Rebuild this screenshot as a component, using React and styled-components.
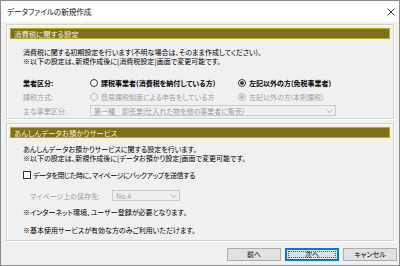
import styled, { createGlobalStyle } from 'styled-components'

const GlobalStyle = createGlobalStyle`
  html, body {
    margin: 0;
    padding: 0;
    background: #f0f0f0;
  }
  body {
    font-family: "Noto Sans CJK JP", "Noto Sans", sans-serif;
    font-feature-settings: "palt";
  }
`

const App = () => {
  return (
    <Window>
      <GlobalStyle />
      <TitleBar>
        <Title>データファイルの新規作成</Title>
        <Close>
          <svg width="8" height="8" viewBox="0 0 8 8">
            <path d="M0.5 0.5 L7.5 7.5 M7.5 0.5 L0.5 7.5" stroke="#222" strokeWidth="0.9" />
          </svg>
        </Close>
      </TitleBar>

      <Body>
        <Group>
          <GroupHeader>消費税に関する設定</GroupHeader>
          <Para>
            <Line>消費税に関する初期設定を行います(不明な場合は、そのまま作成してください)。</Line>
            <Line>※以下の設定は、新規作成後に[消費税設定]画面で変更可能です。</Line>
          </Para>
          <Rows>
            <Row $h={14}>
              <Label $bold>業者区分:</Label>
              <Choice $w={148}>
                <Radio />
                <ChoiceText $bold>課税事業者(消費税を納付している方)</ChoiceText>
              </Choice>
              <Choice>
                <Radio $checked />
                <ChoiceText $bold>左記以外の方(免税事業者)</ChoiceText>
              </Choice>
            </Row>
            <Row $h={13}>
              <Label $disabled>課税方式:</Label>
              <Choice $w={148}>
                <Radio $disabled />
                <ChoiceText $disabled>簡易課税制度による申告をしている方</ChoiceText>
              </Choice>
              <Choice>
                <Radio $checked $disabled />
                <ChoiceText $disabled>左記以外の方(本則課税)</ChoiceText>
              </Choice>
            </Row>
            <Row $h={15}>
              <Label $disabled>主な事業区分:</Label>
              <Select $w={246}>
                <span>第一種　卸売業(仕入れた物を他の事業者に販売)</span>
                <Chevron />
              </Select>
            </Row>
          </Rows>
        </Group>

        <Group $second>
          <GroupHeader>あんしんデータお預かりサービス</GroupHeader>
          <Para $top={7}>
            <Line>あんしんデータお預かりサービスに関する設定を行います。</Line>
            <Line>※以下の設定は、新規作成後に[データお預かり設定]画面で変更可能です。</Line>
          </Para>
          <CheckRow>
            <Check />
            <CheckText>データを閉じた時に、マイページにバックアップを送信する</CheckText>
          </CheckRow>
          <SubRow>
            <SubLabel>マイページ上の保存先:</SubLabel>
            <Select $w={68}>
              <span>No.4</span>
              <Chevron />
            </Select>
          </SubRow>
          <Note $top={5}>※インターネット環境、ユーザー登録が必要となります。</Note>
          <Note $top={9}>※基本使用サービスが有効な方のみご利用いただけます。</Note>
        </Group>

        <Buttons>
          <Button>前へ</Button>
          <Button $focused>次へ</Button>
          <Button>キャンセル</Button>
        </Buttons>
      </Body>
    </Window>
  )
}
export default App

const Chevron = () => (
  <ChevronBox>
    <svg width="7" height="4" viewBox="0 0 7 4">
      <path d="M0.5 0.5 L3.5 3.5 L6.5 0.5" fill="none" stroke="#a8a8a8" strokeWidth="0.8" />
    </svg>
  </ChevronBox>
)

const Window = styled.div`
  width: 400px;
  height: 266px;
  box-sizing: border-box;
  border: 1px solid #8a8a8a;
  background: #f0f0f0;
  display: flex;
  flex-direction: column;
  color: #000;
  font-size: 7px;
`
const TitleBar = styled.div`
  height: 21px;
  background: #fff;
  display: flex;
  align-items: center;
  justify-content: space-between;
  padding: 0 4px 0 6px;
`
const Title = styled.div`
  font-size: 7.5px;
  color: #111;
`
const Close = styled.div`
  display: flex;
  align-items: center;
`
const Body = styled.div`
  display: flex;
  flex-direction: column;
  padding: 2px 5px 0 5px;
`
const Group = styled.div`
  border: 1px solid #d3d3d3;
  box-shadow: inset 1px 1px 0 #fff, 1px 1px 0 #fff;
  padding: 3px 3px 0 3px;
  margin-top: ${p => (p.$second ? 4 : 0)}px;
  height: ${p => (p.$second ? 118 : 95)}px;
  box-sizing: border-box;
  display: flex;
  flex-direction: column;
`
const GroupHeader = styled.div`
  height: 11px;
  box-sizing: border-box;
  background: #7e7014;
  border: 1px solid #bca91e;
  color: #f6f2dc;
  font-size: 7.4px;
  line-height: 9px;
  padding-left: 3px;
`
const Para = styled.div`
  margin-top: ${p => p.$top ?? 9}px;
  padding-left: 13px;
`
const Line = styled.div`
  height: 9px;
  line-height: 9px;
  white-space: nowrap;
`
const Rows = styled.div`
  margin-top: 10px;
  padding-left: 13px;
  display: flex;
  flex-direction: column;
`
const Row = styled.div`
  height: ${p => p.$h}px;
  display: flex;
  align-items: center;
`
const Label = styled.div`
  width: 67px;
  color: ${p => (p.$disabled ? '#a0a0a0' : '#000')};
  font-weight: ${p => (p.$bold ? 700 : 400)};
  white-space: nowrap;
`
const Choice = styled.div`
  width: ${p => (p.$w ? `${p.$w}px` : 'auto')};
  display: flex;
  align-items: center;
  gap: 3px;
`
const ChoiceText = styled.span`
  color: ${p => (p.$disabled ? '#a0a0a0' : '#000')};
  font-weight: ${p => (p.$bold ? 700 : 400)};
  white-space: nowrap;
`
const Radio = styled.span`
  width: 8px;
  height: 8px;
  box-sizing: border-box;
  border-radius: 50%;
  border: 1px solid ${p => (p.$disabled ? '#bcbcbc' : '#333')};
  background: ${p => (p.$disabled ? '#f0f0f0' : '#fff')};
  display: flex;
  align-items: center;
  justify-content: center;
  &::after {
    content: '';
    display: ${p => (p.$checked ? 'block' : 'none')};
    width: 4px;
    height: 4px;
    border-radius: 50%;
    background: ${p => (p.$disabled ? '#bcbcbc' : '#333')};
  }
`
const Select = styled.div`
  width: ${p => p.$w}px;
  height: 11px;
  box-sizing: border-box;
  border: 1px solid #cccccc;
  background: #efefef;
  color: #9d9d9d;
  display: flex;
  align-items: center;
  justify-content: space-between;
  padding-left: 3px;
  white-space: nowrap;
  overflow: hidden;
`
const ChevronBox = styled.span`
  width: 12px;
  display: flex;
  justify-content: center;
`
const CheckRow = styled.div`
  margin-top: 6px;
  height: 12px;
  padding-left: 13px;
  display: flex;
  align-items: center;
  gap: 2px;
  white-space: nowrap;
`
const CheckText = styled.span`
  letter-spacing: -0.4px;
`
const Check = styled.span`
  width: 8px;
  height: 8px;
  box-sizing: border-box;
  border: 1px solid #333;
  background: #fff;
`
const SubRow = styled.div`
  margin-top: 7px;
  height: 15px;
  padding-left: 20px;
  display: flex;
  align-items: center;
`
const SubLabel = styled.div`
  width: 82px;
  color: #a0a0a0;
  white-space: nowrap;
`
const Note = styled.div`
  margin-top: ${p => p.$top}px;
  padding-left: 13px;
  height: 9px;
  line-height: 9px;
  white-space: nowrap;
`
const Buttons = styled.div`
  margin-top: 7px;
  display: flex;
  justify-content: flex-end;
  gap: 4px;
  margin-right: -3px;
`
const Button = styled.div`
  width: 54px;
  height: 13px;
  box-sizing: border-box;
  background: #e1e1e1;
  border: 1px solid ${p => (p.$focused ? '#0078d7' : '#adadad')};
  box-shadow: ${p => (p.$focused ? 'inset 0 0 0 1px #0078d7' : 'none')};
  display: flex;
  align-items: center;
  justify-content: center;
  line-height: 9px;
  position: relative;
  &::after {
    content: '';
    display: ${p => (p.$focused ? 'block' : 'none')};
    position: absolute;
    inset: 2px;
    border: 1px dotted #555;
  }
`
